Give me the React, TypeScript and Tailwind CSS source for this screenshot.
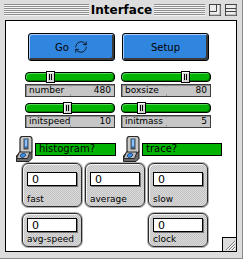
import React from 'react';
import { RefreshCw } from 'lucide-react';

const STRIPES =
  'bg-[repeating-linear-gradient(to_bottom,#8e8e8e_0px,#8e8e8e_1px,#f4f4f4_1px,#f4f4f4_2px)]';

interface SliderProps {
  name: string;
  value: number;
  pos: number; // thumb offset in px
}

const Slider: React.FC<SliderProps> = ({ name, value, pos }) => (
  <div className="flex flex-col gap-[2px] w-[90px]">
    <div className="relative h-[10px] rounded-[4px] border border-black bg-[#00b300] shadow-[inset_1px_1px_0_#55d855,inset_-1px_-1px_0_#007800]">
      <div
        className="absolute top-[-2px] h-[12px] w-[9px] border border-black bg-[#d4d4d4] flex items-center justify-center gap-[1px] shadow-[inset_1px_1px_0_#fff]"
        style={{ left: pos }}
      >
        <span className="w-px h-[6px] bg-black" />
        <span className="w-px h-[6px] bg-black" />
      </div>
    </div>
    <div className="relative h-[13px] border border-[#3c3c3c] bg-[#c6c6c6] flex items-center justify-between px-[3px] text-[9px] leading-none text-black shadow-[inset_1px_1px_0_#8a8a8a]">
      <span>{name}</span>
      <span>{value}</span>
      <span className="absolute left-1/2 top-0 w-px h-[2px] bg-[#9a9a9a]" />
      <span className="absolute left-1/2 bottom-0 w-px h-[2px] bg-[#9a9a9a]" />
    </div>
  </div>
);

const SwitchIcon: React.FC = () => (
  <svg width="18" height="26" viewBox="0 0 18 26">
    <path d="M1.5 20 L5.5 15 L17 15 L17 22.5 L14 25.5 L1.5 25.5 Z" fill="#6a6a6a" stroke="#222" />
    <rect x="5" y="0.5" width="12" height="16.5" rx="2.5" fill="#c9c9c9" stroke="#2a2a2a" strokeWidth="1.2" />
    <rect x="8.5" y="2.5" width="5" height="11" fill="#4a4a4a" />
    <rect x="9.5" y="3" width="3" height="8.5" fill="#3d8fe6" />
    <rect x="10.5" y="4" width="1" height="6" fill="#e8f2ff" />
    <path d="M4.5 16 L15 16 L12.5 22.5 L1.5 22.5 Z" fill="#bdbdbd" stroke="#2a2a2a" />
    <ellipse cx="8" cy="19.3" rx="2.8" ry="1.9" fill="#3d8fe6" stroke="#163f70" strokeWidth="0.8" transform="rotate(-25 8 19.3)" />
  </svg>
);

const Switch: React.FC<{ label: string; boxW: string }> = ({ label, boxW }) => (
  <div className="flex items-center gap-[2px]">
    <SwitchIcon />
    <div className={`${boxW} h-[13px] border border-black bg-[#00b300] flex items-center px-[3px] text-[10px] leading-none text-black`}>
      {label}
    </div>
  </div>
);

const Monitor: React.FC<{ label: string; tall?: boolean }> = ({ label, tall }) => (
  <div
    className={`w-[60px] ${tall ? 'h-[44px] pt-[8px]' : 'h-[34px] pt-[4px]'} rounded-[6px] border border-[#2a2a2a] shadow-[0_0_0_1px_#b0b0b0,inset_1px_1px_0_#f2f2f2] bg-[repeating-conic-gradient(#c2c2c2_0%_25%,#dadada_0%_50%)] bg-[length:2px_2px] flex flex-col px-[4px]`}
  >
    <div className="h-[14px] border border-black bg-white shadow-[1px_1px_0_#777] flex items-center px-[4px] text-[11px] leading-none text-black">
      0
    </div>
    <div className="mt-auto pb-[2px] text-[9px] leading-none text-black">{label}</div>
  </div>
);

const TitleBar: React.FC = () => (
  <div className="h-[20px] flex items-center pl-[4px]">
    <div className={`w-[85px] h-[12px] ${STRIPES}`} />
    <div className="w-[65px] text-center text-[12px] font-bold leading-none text-black">Interface</div>
    <div className={`w-[51px] h-[12px] ${STRIPES}`} />
    <div className="flex gap-[4px] ml-[4px]">
      <svg width="12" height="12" viewBox="0 0 12 12">
        <rect x="0.5" y="0.5" width="11" height="11" fill="#ececec" stroke="#444" />
        <path d="M1 11 H11 V1" fill="none" stroke="#9a9a9a" />
        <path d="M7.5 1 V7.5 H1" fill="none" stroke="#444" />
      </svg>
      <svg width="12" height="12" viewBox="0 0 12 12">
        <rect x="0.5" y="0.5" width="11" height="11" fill="#ececec" stroke="#444" />
        <path d="M1 11 H11 V1" fill="none" stroke="#9a9a9a" />
        <path d="M1 4.5 H11 M1 7.5 H11" fill="none" stroke="#444" />
      </svg>
    </div>
  </div>
);

const GrowBox: React.FC = () => (
  <div className="absolute right-0 bottom-0 w-[14px] h-[14px] border-l border-t border-black bg-[#dcdcdc]">
    <svg width="13" height="13" viewBox="0 0 13 13">
      <path d="M3 12 L12 3 M6 12 L12 6 M9 12 L12 9" stroke="#7a7a7a" />
      <path d="M4 12 L12 4 M7 12 L12 7 M10 12 L12 10" stroke="#fff" />
    </svg>
  </div>
);

const App: React.FC = () => {
  return (
    <div className="w-[243px] h-[259px] bg-[#dddddd] font-['DejaVu_Sans',sans-serif] overflow-hidden border-r border-b border-[#8a8a8a]">
      <TitleBar />
      <div className="relative ml-[5px] w-[232px] h-[232px] border border-black bg-white pt-[12px]">
        <div className="flex gap-[7px] pl-[22px]">
          <button className="w-[87px] h-[28px] rounded-[3px] border border-black bg-[#3086de] shadow-[inset_1px_1px_0_#a8d0f8,inset_-2px_-2px_0_#3a3a3a] flex items-center justify-center gap-[5px] text-[10px] text-black">
            Go
            <RefreshCw size={14} strokeWidth={1.3} color="#000" />
          </button>
          <button className="w-[87px] h-[28px] rounded-[3px] border border-black bg-[#3086de] shadow-[inset_1px_1px_0_#a8d0f8,inset_-2px_-2px_0_#3a3a3a] flex items-center justify-center text-[10px] text-black">
            Setup
          </button>
        </div>

        <div className="flex flex-col gap-[6px] pl-[19px] mt-[11px]">
          <div className="flex gap-[6px]">
            <Slider name="number" value={480} pos={20} />
            <Slider name="boxsize" value={80} pos={59} />
          </div>
          <div className="flex gap-[6px]">
            <Slider name="initspeed" value={10} pos={37} />
            <Slider name="initmass" value={5} pos={15} />
          </div>
        </div>

        <div className="flex gap-[6px] pl-[9px] mt-[8px]">
          <Switch label="histogram?" boxW="w-[81px]" />
          <Switch label="trace?" boxW="w-[80px]" />
        </div>

        <div className="flex gap-[3px] pl-[16px] mt-[1px]">
          <Monitor label="fast" tall />
          <Monitor label="average" tall />
          <Monitor label="slow" tall />
        </div>

        <div className="flex justify-between w-[186px] ml-[16px] mt-[6px]">
          <Monitor label="avg-speed" />
          <Monitor label="clock" />
        </div>

        <GrowBox />
      </div>
    </div>
  );
};

export default App;
